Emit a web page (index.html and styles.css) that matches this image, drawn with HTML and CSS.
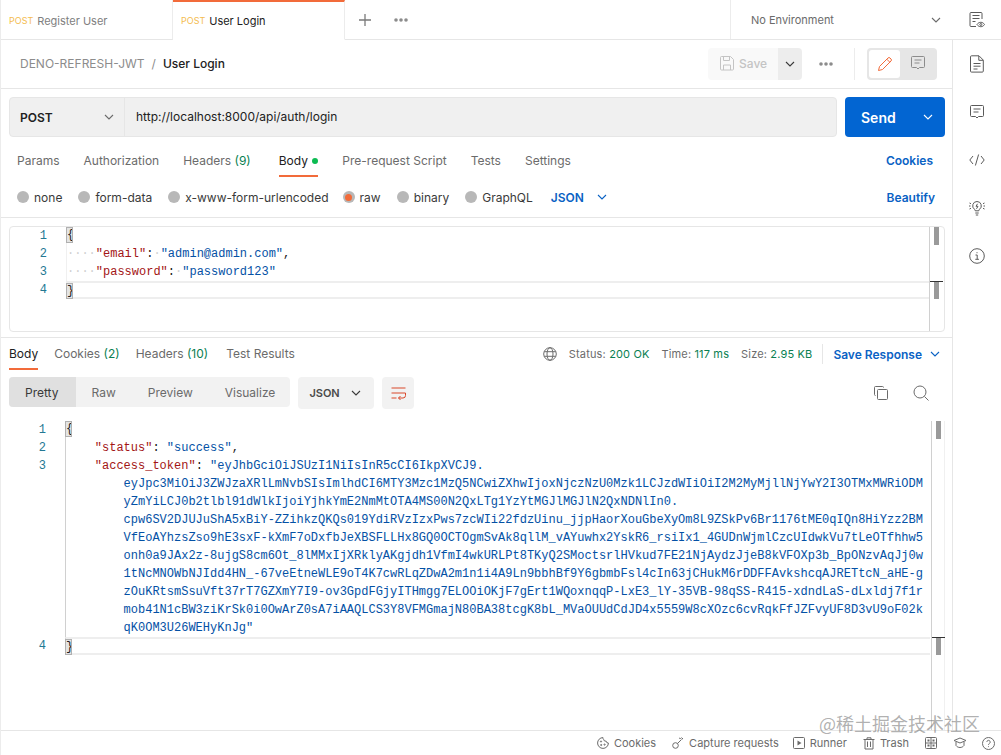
FILE: index.html
```html
<!DOCTYPE html>
<html lang="en">
<head>
  <meta charset="UTF-8" />
  <title>User Login</title>
  <link rel="stylesheet" href="styles.css">
</head>
<body>
  <div class="app">
    <div class="topbar">
      <div class="tab">
        <span class="tab-method">POST</span><span class="tab-name">Register User</span>
      </div>
      <div class="tab tab-active">
        <span class="tab-method">POST</span><span class="tab-name">User Login</span>
      </div>
      <div class="tab-tools">
        <svg class="icon-plus" width="14" height="14" viewBox="0 0 14 14"><path d="M7 1v12M1 7h12" /></svg>
        <svg class="icon-dots" width="16" height="6" viewBox="0 0 16 6"><circle cx="3" cy="3" r="1.8" /><circle cx="8" cy="3" r="1.8" /><circle cx="13" cy="3" r="1.8" /></svg>
      </div>
      <div class="env">
        <span>No Environment</span>
        <svg class="chev" width="10" height="6" viewBox="0 0 10 6"><path d="M1 1l4 4 4-4" /></svg>
      </div>
      <div class="top-side">
        <svg class="side-icon" width="18" height="18" viewBox="0 0 18 18"><path d="M14 8V2.500A1 1 0 0 0 13 1.500H3a1 1 0 0 0-1 1v12a1 1 0 0 0 1 1h5M4.500 4.500h7M4.500 7.500h7M4.500 10.500h3" /><path d="M9 13.500c1-1.500 2.300-2.200 3.800-2.200s2.700.7 3.700 2.200c-1 1.500-2.200 2.200-3.700 2.200S10 15 9 13.500z" /><circle cx="12.800" cy="13.500" r="1" /></svg>
      </div>
    </div>

    <div class="main">
      <div class="workspace">
        <div class="crumbs">
          <span class="crumb-parent">DENO-REFRESH-JWT</span>
          <span class="crumb-sep">/</span>
          <span class="crumb-current">User Login</span>
          <div class="crumb-actions">
            <div class="save-btn">
              <svg width="14" height="15" viewBox="0 0 14 15"><path d="M1.500.500h9l3 3v9.500a1 1 0 0 1-1 1h-11a1 1 0 0 1-1-1V1.500a1 1 0 0 1 1-1z" /><path d="M3.500.500v4h6v-4M3.500 14V9h7v5" /></svg>
              <span>Save</span>
            </div>
            <div class="save-more">
              <svg class="chev chev-dark" width="10" height="6" viewBox="0 0 10 6"><path d="M1 1l4 4 4-4" /></svg>
            </div>
            <svg class="icon-dots crumb-dots" width="16" height="6" viewBox="0 0 16 6"><circle cx="3" cy="3" r="1.800" /><circle cx="8" cy="3" r="1.800" /><circle cx="13" cy="3" r="1.800" /></svg>
            <div class="crumb-divider"></div>
            <div class="mode-toggle">
              <div class="mode-btn mode-on">
                <svg class="pencil" width="16" height="16" viewBox="0 0 16 16"><path d="M1.500 14.500l1-4L11 2a1.400 1.400 0 0 1 2 0l1 1a1.400 1.400 0 0 1 0 2l-8.500 8.500zM9.800 3.200l3 3" /></svg>
              </div>
              <div class="mode-btn">
                <svg class="comment" width="14" height="15" viewBox="0 0 14 15"><path d="M1.500.500h11a1 1 0 0 1 1 1v9a1 1 0 0 1-1 1H8.500L7 13l-1.500-1.500h-4a1 1 0 0 1-1-1v-9a1 1 0 0 1 1-1zM3.500 4h7M3.500 7h5" /></svg>
              </div>
            </div>
          </div>
        </div>

        <div class="url-row">
          <div class="url-box">
            <div class="method">
              <span>POST</span>
              <svg class="chev" width="10" height="6" viewBox="0 0 10 6"><path d="M1 1l4 4 4-4" /></svg>
            </div>
            <div class="url-text">http://localhost:8000/api/auth/login</div>
          </div>
          <div class="send">
            <span class="send-label">Send</span>
            <svg class="chev chev-white" width="10" height="6" viewBox="0 0 10 6"><path d="M1 1l4 4 4-4" /></svg>
          </div>
        </div>

        <div class="req-tabs">
          <span class="req-tab">Params</span>
          <span class="req-tab">Authorization</span>
          <span class="req-tab">Headers <em class="count">(9)</em></span>
          <span class="req-tab req-tab-active">Body <i class="green-dot"></i></span>
          <span class="req-tab">Pre-request Script</span>
          <span class="req-tab">Tests</span>
          <span class="req-tab">Settings</span>
          <span class="link link-cookies">Cookies</span>
        </div>

        <div class="body-types">
          <label class="radio"><i class="radio-dot"></i>none</label>
          <label class="radio"><i class="radio-dot"></i>form-data</label>
          <label class="radio"><i class="radio-dot"></i>x-www-form-urlencoded</label>
          <label class="radio radio-raw"><i class="radio-dot radio-on"></i>raw</label>
          <label class="radio"><i class="radio-dot"></i>binary</label>
          <label class="radio"><i class="radio-dot"></i>GraphQL</label>
          <span class="link lang">JSON <svg class="chev chev-blue" width="10" height="6" viewBox="0 0 10 6"><path d="M1 1l4 4 4-4" /></svg></span>
          <span class="link link-beautify">Beautify</span>
        </div>

        <div class="editor editor-req">
          <div class="gutter-scroll">
            <i class="thumb thumb-top"></i>
            <i class="thumb thumb-end thumb-req"></i>
          </div>
          <div class="line"><span class="ln">1</span><span class="code"><b class="brace">{</b></span></div>
          <div class="line"><span class="ln">2</span><span class="code"><i class="ws">····</i><span class="key">"email"</span>:<i class="ws">·</i><span class="str">"admin@admin.com"</span>,</span></div>
          <div class="line"><span class="ln">3</span><span class="code"><i class="ws">····</i><span class="key">"password"</span>:<i class="ws">·</i><span class="str">"password123"</span></span></div>
          <div class="line line-active"><span class="ln">4</span><span class="code"><b class="brace">}</b></span></div>
        </div>

        <div class="resp-head">
          <span class="resp-tab resp-tab-active">Body</span>
          <span class="resp-tab">Cookies <em class="count">(2)</em></span>
          <span class="resp-tab">Headers <em class="count">(10)</em></span>
          <span class="resp-tab resp-tab-last">Test Results</span>
          <div class="resp-meta">
            <svg class="globe" width="14" height="14" viewBox="0 0 14 14"><circle cx="7" cy="7" r="6.300" /><ellipse cx="7" cy="7" rx="3" ry="6.300" /><path d="M1.200 4.700h11.600M1.200 9.300h11.600" /></svg>
            <span class="meta-item">Status: <em class="ok">200 OK</em></span>
            <span class="meta-item">Time: <em class="ok">117 ms</em></span>
            <span class="meta-item meta-size">Size: <em class="ok">2.95 KB</em></span>
            <span class="meta-divider"></span>
            <span class="link save-resp">Save Response</span>
            <svg class="chev chev-blue" width="10" height="6" viewBox="0 0 10 6"><path d="M1 1l4 4 4-4" /></svg>
          </div>
        </div>

        <div class="resp-tools">
          <div class="view-group">
            <span class="view-btn view-on">Pretty</span>
            <span class="view-btn">Raw</span>
            <span class="view-btn">Preview</span>
            <span class="view-btn">Visualize</span>
          </div>
          <div class="json-select">
            <span>JSON</span>
            <svg class="chev chev-dark" width="10" height="6" viewBox="0 0 10 6"><path d="M1 1l4 4 4-4" /></svg>
          </div>
          <div class="wrap-btn">
            <svg width="15" height="13" viewBox="0 0 15 13"><path d="M.500 1h14M.500 6h14M.500 11h5M14.500 6v2.500a2.500 2.500 0 0 1-2.500 2.500H7.500M9.500 9l-2 2 2 2" /></svg>
          </div>
          <div class="resp-icons">
            <svg width="16" height="16" viewBox="0 0 16 16"><rect x="4.500" y="4.500" width="10" height="10" rx="1" /><path d="M2.500 10.500a1 1 0 0 1-1-1v-7a1 1 0 0 1 1-1h7a1 1 0 0 1 1 1" /></svg>
            <svg width="16" height="16" viewBox="0 0 16 16"><circle cx="7" cy="7" r="6" /><path d="M11.500 11.500l4 4" /></svg>
          </div>
        </div>

        <div class="editor editor-resp">
          <div class="gutter-scroll">
            <i class="thumb thumb-top"></i>
            <i class="thumb thumb-end thumb-resp"></i>
          </div>
          <div class="line"><span class="ln">1</span><span class="code"><b class="brace">{</b></span></div>
          <div class="line"><span class="ln">2</span><span class="code">    <span class="key">"status"</span>: <span class="str">"success"</span>,</span></div>
          <div class="line"><span class="ln">3</span><span class="code">    <span class="key">"access_token"</span>: <span class="str">"eyJhbGciOiJSUzI1NiIsInR5cCI6IkpXVCJ9.</span></span></div>
          <div class="line"><span class="ln"></span><span class="code str">        eyJpc3MiOiJ3ZWJzaXRlLmNvbSIsImlhdCI6MTY3Mzc1MzQ5NCwiZXhwIjoxNjczNzU0Mzk1LCJzdWIiOiI2M2MyMjllNjYwY2I3OTMxMWRiODM</span></div>
          <div class="line"><span class="ln"></span><span class="code str">        yZmYiLCJ0b2tlbl91dWlkIjoiYjhkYmE2NmMtOTA4MS00N2QxLTg1YzYtMGJlMGJlN2QxNDNlIn0.</span></div>
          <div class="line"><span class="ln"></span><span class="code str">        cpw6SV2DJUJuShA5xBiY-ZZihkzQKQs019YdiRVzIzxPws7zcWIi22fdzUinu_jjpHaorXouGbeXyOm8L9ZSkPv6Br1176tME0qIQn8HiYzz2BM</span></div>
          <div class="line"><span class="ln"></span><span class="code str">        VfEoAYhzsZso9hE3sxF-kXmF7oDxfbJeXBSFLLHx8GQ0OCTOgmSvAk8qllM_vAYuwhx2YskR6_rsiIx1_4GUDnWjmlCzcUIdwkVu7tLeOTfhhw5</span></div>
          <div class="line"><span class="ln"></span><span class="code str">        onh0a9JAx2z-8ujgS8cm6Ot_8lMMxIjXRklyAKgjdh1VfmI4wkURLPt8TKyQ2SMoctsrlHVkud7FE21NjAydzJjeB8kVFOXp3b_BpONzvAqJj0w</span></div>
          <div class="line"><span class="ln"></span><span class="code str">        1tNcMNOWbNJIdd4HN_-67veEtneWLE9oT4K7cwRLqZDwA2m1n1i4A9Ln9bbhBf9Y6gbmbFsl4cIn63jCHukM6rDDFFAvkshcqAJRETtcN_aHE-g</span></div>
          <div class="line"><span class="ln"></span><span class="code str">        zOuKRtsmSsuVft37rT7GZXmY7I9-ov3GpdFGjyITHmgg7ELOOiOKjF7gErt1WQoxnqqP-LxE3_lY-35VB-98qSS-R415-xdndLaS-dLxldj7f1r</span></div>
          <div class="line"><span class="ln"></span><span class="code str">        mob41N1cBW3ziKrSk0i0OwArZ0sA7iAAQLCS3Y8VFMGmajN80BA38tcgK8bL_MVaOUUdCdJD4x5559W8cXOzc6cvRqkFfJZFvyUF8D3vU9oF02k</span></div>
          <div class="line"><span class="ln"></span><span class="code str">        qK0OM3U26WEHyKnJg"</span></div>
          <div class="line line-active"><span class="ln">4</span><span class="code"><b class="brace">}</b></span></div>
        </div>
      </div>

      <div class="sidebar">
        <div class="side-slot">
          <svg class="side-icon" width="14" height="18" viewBox="0 0 14 18"><path d="M1.500.800h7.500l4.300 4.300v11a1 1 0 0 1-1 1h-10.800a1 1 0 0 1-1-1V1.800a1 1 0 0 1 1-1zM8.800 1v4.300h4.300M3.500 8.500h7M3.500 11.200h7M3.500 14h4" /></svg>
        </div>
        <div class="side-slot">
          <svg class="side-icon" width="14" height="15" viewBox="0 0 14 15"><path d="M1.500.500h11a1 1 0 0 1 1 1v9a1 1 0 0 1-1 1H8.500L7 13l-1.500-1.500h-4a1 1 0 0 1-1-1v-9a1 1 0 0 1 1-1zM3.500 4h7M3.500 7h5" /></svg>
        </div>
        <div class="side-slot">
          <svg class="side-icon" width="16" height="12" viewBox="0 0 16 12"><path d="M4 2L.800 6 4 10M12 2l3.200 4L12 10M9.600.500L6.400 11.500" /></svg>
        </div>
        <div class="side-slot">
          <svg class="side-icon" width="16" height="16" viewBox="0 0 16 16"><path d="M8 1.500a4.300 4.300 0 0 0-2.500 7.800c.5.400.7.900.7 1.500h3.600c0-.6.200-1.100.7-1.500A4.300 4.300 0 0 0 8 1.500zM6.300 13h3.400M6.800 15h2.400M8.500 3.800L7 6.300h2L7.500 8.800M.500 3l1.500.700M.500 9l1.500-.700M0 6h1.500M15.500 3L14 3.700M15.500 9L14 8.300M16 6h-1.500" /></svg>
        </div>
        <div class="side-slot">
          <svg class="side-icon" width="16" height="16" viewBox="0 0 16 16"><circle cx="8" cy="8" r="7.300" /><path d="M6.500 7h1.700v4.300M6.300 11.300h3.600M8 4.200v1" /></svg>
        </div>
      </div>
    </div>

    <div class="footer">
      <span class="foot-item foot-cookies">
        <svg width="12" height="12" viewBox="0 0 12 12"><path d="M6 .600a5.400 5.400 0 1 0 5.400 5.400 2 2 0 0 1-2.200-1.800A2.200 2.200 0 0 1 6.600 2.400 2 2 0 0 1 6 .600z" /><circle cx="4" cy="4.500" r=".6" /><circle cx="4.200" cy="8" r=".6" /><circle cx="7.600" cy="7.600" r=".6" /></svg>
        Cookies
      </span>
      <span class="foot-item foot-capture">
        <svg width="12" height="12" viewBox="0 0 12 12"><circle cx="3.500" cy="8.500" r="2.800" /><path d="M5.500 6.500L9 3M7 1.200c1.200 0 2.200.5 3 1.500M9.500.500 11 2" /></svg>
        Capture requests
      </span>
      <span class="foot-item foot-runner">
        <svg width="12" height="12" viewBox="0 0 12 12"><rect x=".5" y=".5" width="11" height="11" rx="1" /><path class="solid" d="M4.500 3.500L8.500 6l-4 2.500z" /></svg>
        Runner
      </span>
      <span class="foot-item foot-trash">
        <svg width="12" height="13" viewBox="0 0 12 13"><path d="M.500 2.500h11M4 2.500V.800h4v1.700M2 2.500v9.500h8V2.500M4.500 4.500v5.500M7.500 4.500v5.500" /></svg>
        Trash
      </span>
      <svg class="foot-icon foot-grid" width="12" height="12" viewBox="0 0 12 12"><rect x=".5" y=".5" width="11" height="11" rx="1" /><path d="M6 .5v11M.500 6h11" /><path class="solid" d="M2.500 2.500h2v2h-2zM7.500 2.500h2v2h-2zM2.500 7.500h2v2h-2zM7.500 7.500h2v2h-2z" /></svg>
      <svg class="foot-icon foot-hat" width="14" height="12" viewBox="0 0 14 12"><path d="M1 3.500L7 1l6 2.500L7 6zM3 5v3.500c1 1.300 2.300 2 4 2s3-.7 4-2V5" /></svg>
      <svg class="foot-icon foot-help" width="13" height="13" viewBox="0 0 13 13"><circle cx="6.500" cy="6.500" r="6" /><path d="M4.800 5a1.700 1.700 0 1 1 2.600 1.500c-.6.400-.9.700-.9 1.400M6.500 9.300v.8" /></svg>
    </div>

    <div class="watermark">@稀土掘金技术社区</div>
  </div>
</body>
</html>
```

FILE: styles.css
```css
* {
  box-sizing: border-box;
  margin: 0;
  padding: 0;
}

body {
  font-family: 'Inter', 'Liberation Sans', sans-serif;
  font-size: 12px;
  color: #212121;
  background: white;
  overflow: hidden;
}

em, i {
  font-style: normal;
}

svg {
  fill: none;
  stroke: #6b6b6b;
  stroke-width: 1;
  flex: none;
}

svg .solid {
  fill: #6b6b6b;
  stroke: none;
}

.side-icon {
  stroke: #5a5a5a;
}

.app {
  position: relative;
  width: 1001px;
  height: 755px;
  display: flex;
  flex-direction: column;
  border-left: 1px solid #ececec;
}

/* top tabs */
.topbar {
  height: 40px;
  display: flex;
  border-bottom: 1px solid #e6e6e6;
  flex: none;
}

.tab {
  width: 172px;
  height: 40px;
  padding: 2px 0 0 8px;
  display: flex;
  align-items: center;
  border-right: 1px solid #ececec;
  border-bottom: 1px solid #e6e6e6;
}

.tab-active {
  border-top: 2px solid #f26b3a;
  padding-top: 0;
  border-bottom: 1px solid white;
}

.tab-method {
  font-size: 9px;
  color: #f4bc4f;
  margin-right: 4px;
}

.tab-name {
  font-size: 11px;
  color: #808080;
}

.tab-active .tab-name {
  color: #212121;
}

.tab-tools {
  display: flex;
  align-items: center;
  gap: 21px;
  padding-left: 13px;
  flex: 1;
}

.icon-plus path {
  stroke: #7a7a7a;
  stroke-width: 1.3;
}

.icon-dots circle {
  fill: #8c8c8c;
  stroke: none;
}

.env {
  width: 223px;
  border-left: 1px solid #ececec;
  display: flex;
  align-items: center;
  justify-content: space-between;
  padding: 0 12px 0 20px;
  font-size: 11px;
  color: #6b6b6b;
}

.chev {
  stroke: #6b6b6b;
  stroke-width: 1.1;
}

.chev-dark {
  stroke: #3a3a3a;
}

.chev-white {
  stroke: white;
}

.chev-blue {
  stroke: #0a62c4;
}

.top-side {
  width: 48px;
  display: flex;
  align-items: center;
  justify-content: center;
}

.main {
  flex: 1;
  display: flex;
  min-height: 0;
}

.workspace {
  flex: 1;
  min-width: 0;
  display: flex;
  flex-direction: column;
}

.sidebar {
  width: 49px;
  border-left: 1px solid #e6e6e6;
  flex: none;
}

.side-slot {
  height: 48px;
  display: flex;
  align-items: center;
  justify-content: center;
}

/* breadcrumb */
.crumbs {
  height: 49px;
  padding: 0 15px 1px 19px;
  display: flex;
  align-items: center;
  border-bottom: 1px solid #e6e6e6;
  flex: none;
}

.crumb-parent {
  color: #8c8c8c;
}

.crumb-sep {
  color: #8c8c8c;
  margin: 0 7px;
}

.crumb-current {
  font-weight: 500;
}

.crumb-actions {
  margin-left: auto;
  display: flex;
  align-items: center;
}

.save-btn {
  width: 70px;
  height: 32px;
  padding-left: 12px;
  display: flex;
  align-items: center;
  gap: 5px;
  background: #f9f9f9;
  border-radius: 4px 0 0 4px;
  color: #c4c4c4;
  font-weight: 500;
}

.save-btn svg {
  stroke: #c4c4c4;
}

.save-more {
  width: 24px;
  height: 32px;
  background: #ededed;
  border-radius: 0 4px 4px 0;
  display: flex;
  align-items: center;
  justify-content: center;
}

.crumb-dots {
  margin: 0 20px 0 16px;
}

.crumb-divider {
  width: 1px;
  height: 32px;
  background: #ececec;
  margin-right: 12px;
}

.mode-toggle {
  width: 70px;
  height: 32px;
  padding: 2px;
  background: #e6e6e6;
  border-radius: 4px;
  display: flex;
}

.mode-btn {
  width: 32px;
  height: 28px;
  margin-right: 2px;
  border-radius: 3px;
  display: flex;
  align-items: center;
  justify-content: center;
}

.mode-on {
  background: white;
}

.pencil {
  stroke: #f26b3a;
}

.comment {
  stroke: #8c8c8c;
}

/* url bar */
.url-row {
  padding: 8px 7px 0 8px;
  display: flex;
  gap: 8px;
  flex: none;
}

.url-box {
  flex: 1;
  height: 40px;
  display: flex;
  background: #f0f0f0;
  border: 1px solid #e6e6e6;
  border-radius: 4px;
}

.method {
  width: 115px;
  padding: 0 10px;
  display: flex;
  align-items: center;
  justify-content: space-between;
  border-right: 1px solid #e6e6e6;
  font-weight: 600;
}

.url-text {
  padding-left: 11px;
  line-height: 37px;
}

.send {
  width: 100px;
  height: 40px;
  background: #0265d2;
  border-radius: 4px;
  color: white;
  display: flex;
  align-items: center;
  justify-content: space-between;
  padding: 0 12px 0 16px;
}

.send-label {
  font-size: 14px;
  font-weight: 600;
}

/* request tabs */
.req-tabs {
  height: 34px;
  margin-top: 6px;
  padding: 0 19px 0 16px;
  display: flex;
  gap: 24px;
  flex: none;
}

.req-tab {
  color: #6b6b6b;
  padding-top: 10px;
  border-bottom: 2px solid transparent;
  white-space: nowrap;
}

.req-tab-active {
  color: #212121;
  border-bottom-color: #f26b3a;
  margin-left: 4px;
}

.count {
  color: #0a7f52;
}

.green-dot {
  display: inline-block;
  width: 6px;
  height: 6px;
  margin-left: 1px;
  margin-bottom: 1px;
  border-radius: 50%;
  background: #0cbb52;
}

.link {
  color: #0a62c4;
  font-weight: 600;
}

.link-cookies {
  margin-left: auto;
  padding-top: 10px;
}

/* body types */
.body-types {
  height: 41px;
  padding: 0 17px 0 16px;
  display: flex;
  align-items: center;
  gap: 16px;
  border-bottom: 1px solid #e6e6e6;
  flex: none;
}

.radio {
  display: flex;
  align-items: center;
  gap: 5px;
  color: #3a3a3a;
  white-space: nowrap;
}

.radio-raw {
  margin-left: -2px;
}

.radio-dot {
  width: 12px;
  height: 12px;
  border-radius: 50%;
  background: #b8b8b8;
  display: flex;
  align-items: center;
  justify-content: center;
}

.radio-on::after {
  content: "";
  width: 7px;
  height: 7px;
  border-radius: 50%;
  background: #f26b3a;
}

.lang {
  margin-left: 2px;
  display: flex;
  align-items: center;
  gap: 13px;
}

.link-beautify {
  margin-left: auto;
}

/* code editors */
.editor {
  position: relative;
  font-family: 'Liberation Mono', monospace;
  font-size: 12px;
  line-height: 18px;
  flex: none;
}

.editor-req {
  height: 106px;
  margin: 8px 7px 0 8px;
  border: 1px solid #e6e6e6;
  border-radius: 4px;
}

.editor-resp {
  flex: 1;
  margin: 12px 7px 0 8px;
}

.line {
  display: flex;
  height: 18px;
  white-space: pre;
}

.ln {
  width: 37px;
  text-align: right;
  color: #237893;
  flex: none;
}

.code {
  margin-left: 19px;
  flex: 1;
  color: #212121;
  border-left: 1px solid #d0d0d0;
  margin-right: 15px;
}

.editor-req .code {
  border-left-color: #f0f0f0;
}

.line-active .code {
  border-top: 2px solid #eeeeee;
  border-bottom: 2px solid #eeeeee;
  line-height: 14px;
}

.brace {
  display: inline-block;
  width: 7px;
  height: 16px;
  line-height: 15px;
  margin-left: -1px;
  font-weight: normal;
  background: #e4e4e4;
  border: 1px solid #b0b0b0;
  overflow: hidden;
}

.key {
  color: #a31515;
}

.str {
  color: #0451a5;
}

.ws {
  color: #d0d0d0;
}

.gutter-scroll {
  position: absolute;
  top: 0;
  right: 0;
  bottom: 0;
  width: 15px;
  border-left: 1px solid #d0d0d0;
}

.editor-resp .gutter-scroll {
  border-right: 1px solid #f0f0f0;
  width: 14px;
}

.thumb {
  position: absolute;
  left: 4px;
  width: 5px;
  height: 18px;
  background: #9a9a9a;
}

.thumb-top {
  top: 0;
}

.thumb-end::before {
  content: "";
  position: absolute;
  top: 0;
  left: -4px;
  width: 13px;
  height: 1px;
  background: #333;
}

.thumb-req {
  top: 54px;
}

.thumb-resp {
  top: 216px;
}

/* response */
.resp-head {
  margin-top: 5px;
  height: 33px;
  padding: 0 12px 0 8px;
  display: flex;
  gap: 16px;
  border-top: 1px solid #e6e6e6;
  flex: none;
}

.resp-tab {
  color: #6b6b6b;
  padding-top: 8px;
  border-bottom: 2px solid transparent;
  white-space: nowrap;
}

.resp-tab-active {
  color: #212121;
  border-bottom-color: #f26b3a;
}

.resp-tab-last {
  margin-left: 2px;
}

.resp-meta {
  margin-left: auto;
  height: 32px;
  display: flex;
  align-items: center;
  font-size: 11px;
  color: #6b6b6b;
}

.globe {
  margin-right: 12px;
}

.meta-item {
  margin-right: 12px;
  white-space: nowrap;
  letter-spacing: 0.15px;
}

.meta-size {
  margin-right: 10px;
}

.ok {
  color: #0a7f52;
}

.meta-divider {
  width: 1px;
  height: 20px;
  background: #e6e6e6;
  margin-right: 10px;
}

.save-resp {
  font-size: 12px;
  margin-right: 8px;
}

.resp-tools {
  margin-top: 7px;
  padding: 0 15px 0 8px;
  display: flex;
  align-items: flex-start;
  gap: 8px;
  flex: none;
}

.view-group {
  height: 30px;
  display: flex;
  background: #f2f2f2;
  border-radius: 4px;
}

.view-btn {
  padding: 0 16px;
  line-height: 31px;
  color: #6b6b6b;
}

.view-btn:last-child {
  padding-right: 15px;
}

.view-on {
  padding-right: 17px;
  background: #e0e0e0;
  color: #3a3a3a;
  border-radius: 4px 0 0 4px;
}

.json-select {
  width: 76px;
  height: 32px;
  padding: 0 13px 0 11px;
  background: #f2f2f2;
  border-radius: 4px;
  display: flex;
  align-items: center;
  justify-content: space-between;
  font-size: 11px;
  font-weight: 600;
  color: #4a4a4a;
}

.wrap-btn {
  width: 32px;
  height: 32px;
  background: #f2f2f2;
  border-radius: 4px;
  display: flex;
  align-items: center;
  justify-content: center;
}

.wrap-btn svg {
  stroke: #d9482b;
}

.resp-icons {
  margin-left: auto;
  height: 32px;
  display: flex;
  align-items: center;
  gap: 24px;
  padding-right: 8px;
}

/* footer */
.footer {
  height: 25px;
  position: relative;
  display: flex;
  align-items: center;
  justify-content: flex-end;
  padding-right: 6px;
  border-top: 1px solid #e6e6e6;
  font-size: 11px;
  color: #6b6b6b;
  flex: none;
}

.foot-item {
  display: flex;
  align-items: center;
  gap: 5px;
  margin-right: 16px;
  white-space: nowrap;
}

.foot-capture {
  margin-right: 14px;
}

.foot-icon {
  margin-left: 16px;
}

.foot-grid {
  margin-left: 0;
}

.foot-help {
  margin-left: 15px;
}

.watermark {
  position: absolute;
  right: 21px;
  top: 711px;
  font-family: 'Noto Sans CJK SC', sans-serif;
  font-size: 18px;
  line-height: 24px;
  color: rgba(110, 110, 110, 0.55);
  white-space: nowrap;
}
```
